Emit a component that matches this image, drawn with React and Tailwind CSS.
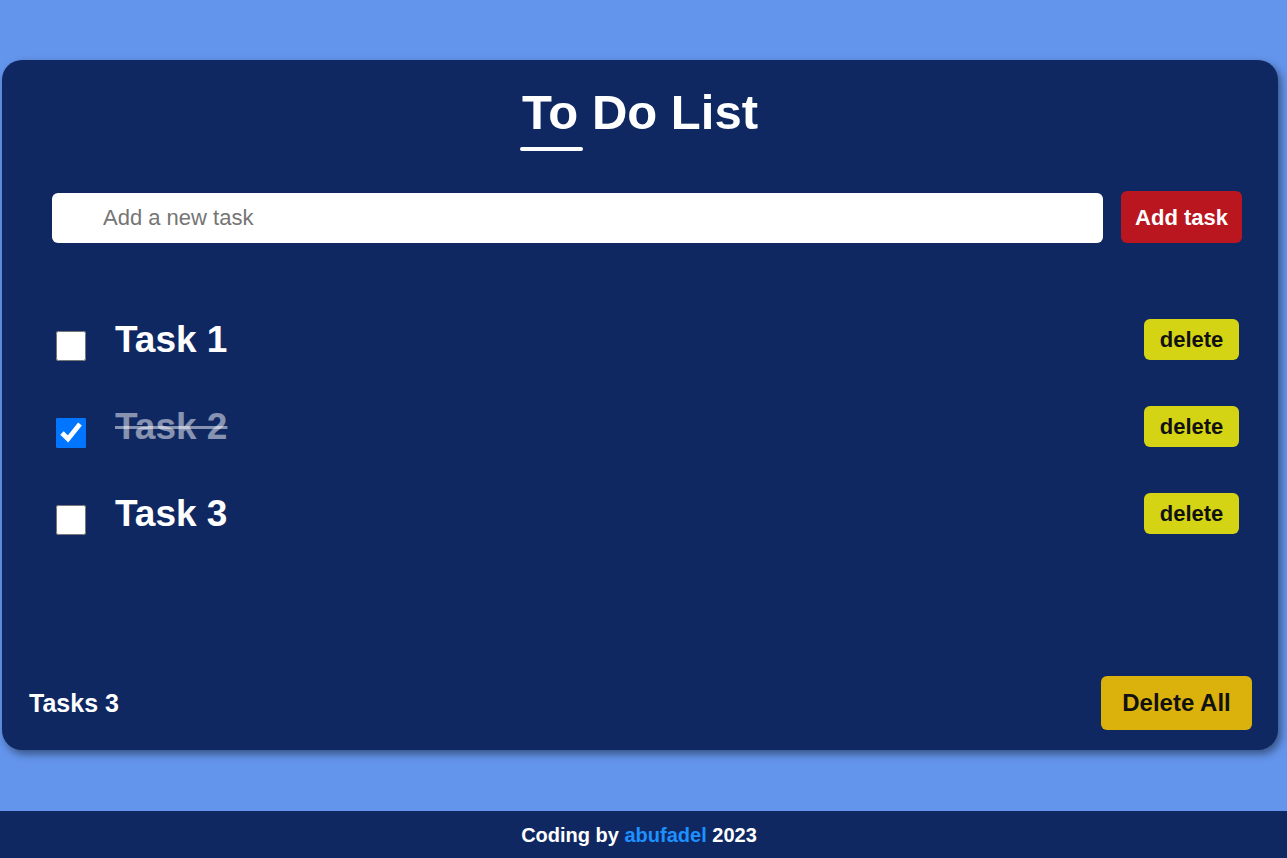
import React, { useState } from "react";

const font = { fontFamily: '"Liberation Sans", Arial, sans-serif' };

export default function App() {
  const [tasks, setTasks] = useState([
    { id: 1, title: "Task 1", done: false },
    { id: 2, title: "Task 2", done: true },
    { id: 3, title: "Task 3", done: false },
  ]);
  const [text, setText] = useState("");

  const addTask = () => {
    if (!text.trim()) return;
    setTasks([...tasks, { id: Date.now(), title: text.trim(), done: false }]);
    setText("");
  };

  const toggle = (id) =>
    setTasks(tasks.map((t) => (t.id === id ? { ...t, done: !t.done } : t)));

  const remove = (id) => setTasks(tasks.filter((t) => t.id !== id));

  return (
    <div className="flex min-h-screen flex-col bg-[#6495ed]" style={font}>
      {/* Card */}
      <div className="ml-[2px] mr-[9px] mt-[60px] flex h-[690px] flex-col rounded-[20px] bg-[#0f2862] shadow-[3px_4px_8px_rgba(0,0,0,0.45)]">
        <h1 className="mt-[28px] text-center text-[49px] font-bold leading-none text-white">
          <span className="relative">
            To
            <span className="absolute left-[-2px] top-[62px] h-[4px] w-[63px] rounded-full bg-white"></span>
          </span>{" "}
          Do List
        </h1>

        {/* Input row */}
        <div className="ml-[50px] mr-[36px] mt-[54px] flex items-end gap-[18px]">
          <input
            type="text"
            value={text}
            onChange={(e) => setText(e.target.value)}
            placeholder="Add a new task"
            className="h-[50px] flex-1 rounded-md bg-white pl-[51px] text-[22px] text-black outline-none placeholder:text-[#757575]"
          />
          <button
            onClick={addTask}
            className="h-[52px] rounded-md bg-[#ba1620] px-[14px] text-[22px] font-bold text-white"
          >
            Add task
          </button>
        </div>

        {/* Task list */}
        <div className="ml-[54px] mr-[39px] mt-[53px] flex flex-col">
          {tasks.map((t) => (
            <div key={t.id} className="flex h-[87px] items-center">
              <input
                type="checkbox"
                checked={t.done}
                onChange={() => toggle(t.id)}
                className="mt-[12px] h-[30px] w-[30px] shrink-0"
              />
              <span
                className={
                  "ml-[29px] flex-1 text-[37px] font-bold leading-none " +
                  (t.done ? "text-white/50 line-through" : "text-white")
                }
              >
                {t.title}
              </span>
              <button
                onClick={() => remove(t.id)}
                className="h-[41px] w-[95px] rounded-md bg-[#d4d415] text-[22px] font-bold text-[#111]"
              >
                delete
              </button>
            </div>
          ))}
        </div>

        {/* Card footer */}
        <div className="ml-[27px] mr-[26px] mt-auto mb-[20px] flex items-center justify-between">
          <span className="mt-[2px] text-[25px] font-bold text-white">Tasks {tasks.length}</span>
          <button
            onClick={() => setTasks([])}
            className="h-[54px] w-[151px] rounded-md bg-[#dbb20b] text-[24px] font-bold text-[#111]"
          >
            Delete All
          </button>
        </div>
      </div>

      {/* Page footer */}
      <footer className="mt-auto flex h-[47px] items-center justify-center bg-[#0f2862] pr-[9px] text-[20px] font-bold text-white">
        Coding by&nbsp;<span className="text-[#1e90ff]">abufadel</span>&nbsp;2023
      </footer>
    </div>
  );
}
